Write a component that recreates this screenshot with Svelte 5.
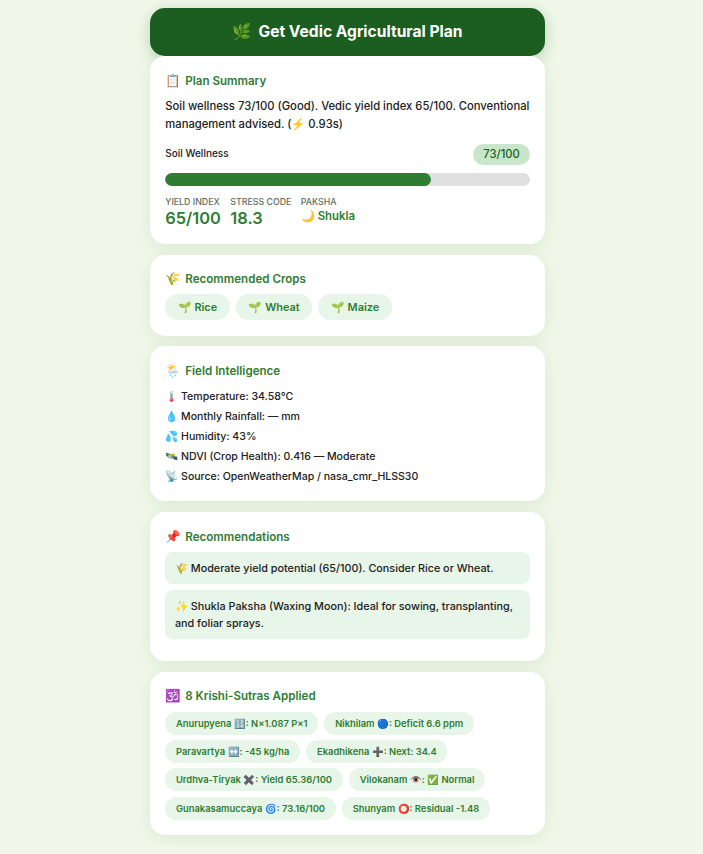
<script>
  const crops = ['Rice', 'Wheat', 'Maize']
  const field = [
    ['🌡️', 'Temperature: 34.58°C'],
    ['💧', 'Monthly Rainfall: — mm'],
    ['💦', 'Humidity: 43%'],
    ['🛰️', 'NDVI (Crop Health): 0.416 — Moderate'],
    ['📡', 'Source: OpenWeatherMap / nasa_cmr_HLSS30']
  ]
  const sutras = [
    'Anurupyena 🔢: N×1.087 P×1',
    'Nikhilam 🔵: Deficit 6.6 ppm',
    'Paravartya ↔️: -45 kg/ha',
    'Ekadhikena ➕: Next: 34.4',
    'Urdhva-Tiryak ✖️: Yield 65.36/100',
    'Vilokanam 👁️: ✅ Normal',
    'Gunakasamuccaya 🌀: 73.16/100',
    'Shunyam ⭕: Residual -1.48'
  ]
</script>

<div class="shell">
  <div class="page">
    <button class="cta"><span class="cta-icon">🌿</span>Get Vedic Agricultural Plan</button>

    <section class="card">
      <h3><span class="ico">📋</span>Plan Summary</h3>
      <p class="summary">Soil wellness 73/100 (Good). Vedic yield index 65/100. Conventional management advised. (⚡ 0.93s)</p>
      <div class="score-row">
        <span class="score-label">Soil Wellness</span>
        <span class="score">73/100</span>
      </div>
      <div class="bar"><div class="fill" style="width: 73%"></div></div>
      <div class="stats">
        <div><div class="lbl">YIELD INDEX</div><div class="val">65/100</div></div>
        <div><div class="lbl">STRESS CODE</div><div class="val">18.3</div></div>
        <div><div class="lbl">PAKSHA</div><div class="val small">🌙 Shukla</div></div>
      </div>
    </section>

    <section class="card">
      <h3><span class="ico">🌾</span>Recommended Crops</h3>
      <div class="chips">
        {#each crops as c}
          <span class="chip">🌱 {c}</span>
        {/each}
      </div>
    </section>

    <section class="card">
      <h3><span class="ico">🌦️</span>Field Intelligence</h3>
      <div class="fields">
        {#each field as [icon, text]}
          <div class="field">{icon} {text}</div>
        {/each}
      </div>
    </section>

    <section class="card recs">
      <h3><span class="ico">📌</span>Recommendations</h3>
      <div class="rec">🌾 Moderate yield potential (65/100). Consider Rice or Wheat.</div>
      <div class="rec">✨ Shukla Paksha (Waxing Moon): Ideal for sowing, transplanting, and foliar sprays.</div>
    </section>

    <section class="card">
      <h3><span class="ico">🕉️</span>8 Krishi-Sutras Applied</h3>
      <div class="sutras">
        {#each sutras as s}
          <span class="sutra">{s}</span>
        {/each}
      </div>
    </section>
  </div>
</div>

<style>
  :global(body) { background: #f1f8e9; font-family: Inter, "Noto Sans", sans-serif; }
  .shell { padding-right: 8px; }
  .page { width: 395.5px; margin: 0 auto; padding: 8px 0 12px; }
  .cta { display: block; width: 100%; height: 47.5px; margin-bottom: 0.5px; border: none; border-radius: 15px; background: #1b5e20; color: #fff; font: 700 15.6px Inter, sans-serif; box-shadow: 0 4px 16px rgba(27, 94, 32, 0.25); }
  .cta-icon { margin-right: 7px; }
  .card { background: #fff; border-radius: 15px; padding: 15.5px; margin-bottom: 10.8px; box-shadow: 0 4px 18px rgba(27, 94, 32, 0.1); }
  h3 { height: 17px; margin: 0 0 7px; font-size: 11.6px; line-height: 18.5px; font-weight: 600; color: #2e7d32; }
  .ico { display: inline-block; width: 20px; font-size: 12.5px; line-height: 1; }
  .summary { margin: 8px 0 0; font-size: 11.25px; line-height: 18px; font-weight: 500; color: #212121; }
  .score-row { display: flex; justify-content: space-between; align-items: flex-start; margin-top: 11.5px; font-size: 10px; font-weight: 500; color: #212121; }
  .score-label { line-height: 18px; }
  .score { background: #c8e6c9; color: #1b5e20; border-radius: 11px; padding: 0 10px; line-height: 21px; font-size: 11.2px; }
  .bar { height: 13.7px; background: #e0e0e0; border-radius: 7px; margin-top: 7.7px; overflow: hidden; }
  .fill { height: 100%; background: #2e7d32; border-radius: 7px; }
  .stats { display: flex; gap: 9.5px; margin-top: 10px; }
  .lbl { font-size: 8.8px; line-height: 12px; color: #5c6f5e; font-weight: 500; }
  .val { font-size: 16.4px; line-height: 20px; font-weight: 600; color: #2e7d32; }
  .val.small { font-size: 11.4px; line-height: 17px; }
  .chips { display: flex; gap: 6.5px; }
  .chip { background: #e8f5e9; color: #2e7d32; border-radius: 13px; padding: 0 12.4px; line-height: 26px; font-size: 10.9px; font-weight: 600; }
  .fields { padding-top: 1px; margin-bottom: -1px; }
  .field { font-size: 10.55px; line-height: 20px; font-weight: 500; color: #212121; }
  .rec { background: #e8f5e9; border-radius: 8px; padding: 9px 9.7px 6.4px; margin-bottom: 6.7px; font-size: 10.8px; line-height: 16.6px; font-weight: 500; color: #212121; }
  .recs { padding-bottom: 21.8px; }
  .recs .rec:last-child { margin-bottom: 0; }
  .sutras { display: flex; flex-wrap: wrap; gap: 5.4px 6.3px; padding-top: 0.4px; }
  .sutra { background: #e8f5e9; color: #2e7d32; border-radius: 11.5px; padding: 1px 10.7px 0; line-height: 22px; font-size: 9.4px; font-weight: 600; }
</style>
